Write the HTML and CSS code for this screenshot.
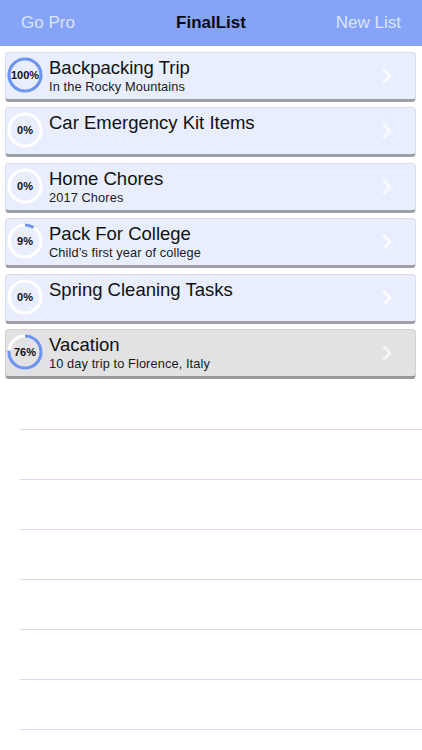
FILE: index.html
```html
<!DOCTYPE html>
<html>
<head>
<meta charset="utf-8">
<link rel="stylesheet" href="styles.css">
</head>
<body>
<header class="nav">
  <span class="nav-btn left">Go Pro</span>
  <span class="nav-title">FinalList</span>
  <span class="nav-btn right">New List</span>
</header>
<main class="lists">
  <div class="card">
    <div class="ring">
      <svg viewBox="0 0 36 36" width="36" height="36"><circle class="track" cx="18" cy="18" r="16"/><circle class="prog" cx="18" cy="18" r="16" stroke-dasharray="100.53 100.53"/></svg>
      <span class="pct">100%</span>
    </div>
    <div class="text"><div class="title">Backpacking Trip</div><div class="sub">In the Rocky Mountains</div></div>
    <svg class="chev" viewBox="0 0 10 16" width="10" height="16"><polyline points="2,2 8,8 2,14"/></svg>
  </div>
  <div class="card">
    <div class="ring">
      <svg viewBox="0 0 36 36" width="36" height="36"><circle class="track" cx="18" cy="18" r="16"/></svg>
      <span class="pct">0%</span>
    </div>
    <div class="text"><div class="title">Car Emergency Kit Items</div></div>
    <svg class="chev" viewBox="0 0 10 16" width="10" height="16"><polyline points="2,2 8,8 2,14"/></svg>
  </div>
  <div class="card">
    <div class="ring">
      <svg viewBox="0 0 36 36" width="36" height="36"><circle class="track" cx="18" cy="18" r="16"/></svg>
      <span class="pct">0%</span>
    </div>
    <div class="text"><div class="title">Home Chores</div><div class="sub">2017 Chores</div></div>
    <svg class="chev" viewBox="0 0 10 16" width="10" height="16"><polyline points="2,2 8,8 2,14"/></svg>
  </div>
  <div class="card">
    <div class="ring">
      <svg viewBox="0 0 36 36" width="36" height="36"><circle class="track" cx="18" cy="18" r="16"/><circle class="prog" cx="18" cy="18" r="16" stroke-dasharray="9.05 100.53"/></svg>
      <span class="pct">9%</span>
    </div>
    <div class="text"><div class="title">Pack For College</div><div class="sub">Child’s first year of college</div></div>
    <svg class="chev" viewBox="0 0 10 16" width="10" height="16"><polyline points="2,2 8,8 2,14"/></svg>
  </div>
  <div class="card">
    <div class="ring">
      <svg viewBox="0 0 36 36" width="36" height="36"><circle class="track" cx="18" cy="18" r="16"/></svg>
      <span class="pct">0%</span>
    </div>
    <div class="text"><div class="title">Spring Cleaning Tasks</div></div>
    <svg class="chev" viewBox="0 0 10 16" width="10" height="16"><polyline points="2,2 8,8 2,14"/></svg>
  </div>
  <div class="card selected">
    <div class="ring">
      <svg viewBox="0 0 36 36" width="36" height="36"><circle class="track" cx="18" cy="18" r="16"/><circle class="prog" cx="18" cy="18" r="16" stroke-dasharray="76.4 100.53"/></svg>
      <span class="pct">76%</span>
    </div>
    <div class="text"><div class="title">Vacation</div><div class="sub">10 day trip to Florence, Italy</div></div>
    <svg class="chev" viewBox="0 0 10 16" width="10" height="16"><polyline points="2,2 8,8 2,14"/></svg>
  </div>
</main>
<div class="empty">
  <div class="row"></div>
  <div class="row"></div>
  <div class="row"></div>
  <div class="row"></div>
  <div class="row"></div>
  <div class="row"></div>
  <div class="row"></div>
</div>
</body>
</html>
```
FILE: styles.css
```css
html, body {
  margin: 0;
  padding: 0;
  background: #ffffff;
  font-family: "Liberation Sans", Arial, sans-serif;
  color: #111;
}
.nav {
  height: 46px;
  background: #86a4f7;
  display: grid;
  grid-template-columns: 1fr auto 1fr;
  align-items: center;
  padding: 0 21px;
  box-sizing: border-box;
}
.nav-btn {
  font-size: 17px;
  color: #dbe5fd;
}
.nav-btn.right {
  justify-self: end;
}
.nav-title {
  font-size: 17px;
  font-weight: bold;
  color: #0b0b12;
}
.lists {
  display: flex;
  flex-direction: column;
  gap: 5.4px;
  padding: 6px 6px 0 5px;
}
.card {
  background: #e8eefd;
  border: 1px solid #d6dcec;
  border-bottom: 3px solid #9d9fa4;
  border-radius: 4px;
  box-sizing: border-box;
  height: 50px;
  display: flex;
  align-items: flex-start;
}
.card.selected {
  background: #e2e2e4;
  border-color: #d0d0d2;
  border-bottom-color: #9a9a9c;
}
.ring {
  width: 36px;
  height: 36px;
  margin: 4px 0 0 1px;
  position: relative;
  flex: none;
}
.ring svg {
  display: block;
  transform: rotate(-90deg);
}
.track {
  fill: none;
  stroke: #ffffff;
  stroke-width: 3.2;
}
.prog {
  fill: none;
  stroke: #6d95ef;
  stroke-width: 3.2;
}
.pct {
  position: absolute;
  inset: 0;
  display: flex;
  align-items: center;
  justify-content: center;
  font-size: 11px;
  font-weight: bold;
  color: #111;
}
.text {
  margin-left: 6px;
  padding-top: 4px;
  flex: 1;
}
.title {
  font-size: 18.5px;
  line-height: 22px;
  color: #111;
}
.sub {
  font-size: 12.8px;
  line-height: 16px;
  letter-spacing: 0.1px;
  color: #1a1a1a;
}
.chev {
  margin: 15px 23px 0 0;
  flex: none;
}
.chev polyline {
  fill: none;
  stroke: #f9fbff;
  stroke-width: 2.8;
  stroke-linecap: round;
  stroke-linejoin: round;
}
.selected .chev polyline {
  stroke: #f6f6f6;
}
.empty {
  padding-top: 1px;
}
.row {
  height: 50px;
  margin-left: 20px;
  border-bottom: 1px solid #d7daf3;
  box-sizing: border-box;
}
```
